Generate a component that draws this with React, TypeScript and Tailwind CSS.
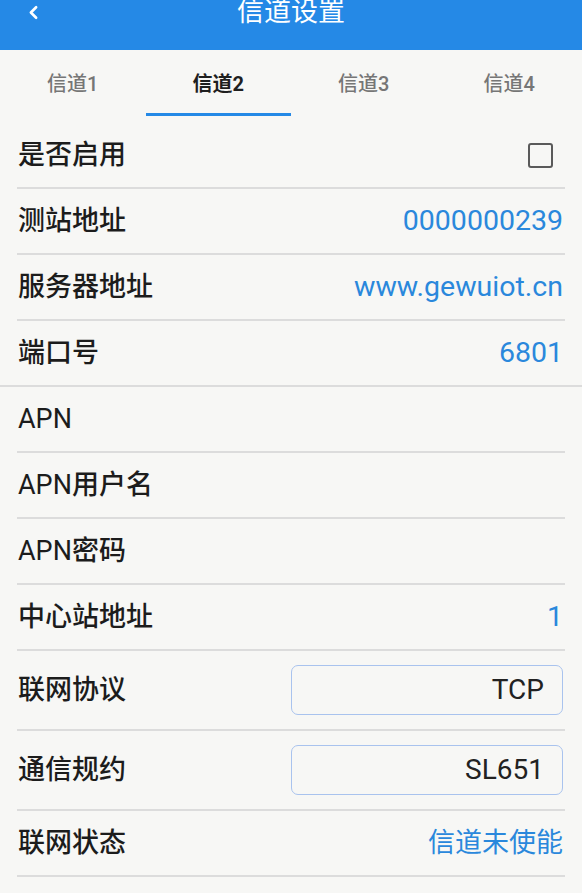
import React from "react";
import { ChevronLeft } from "lucide-react";

const font = { fontFamily: 'Roboto, "Noto Sans CJK SC", sans-serif' };

function Divider({ full }: { full?: boolean }) {
  return <div className={full ? "h-[2px] bg-[#dcdcdc]" : "mx-[17px] h-[2px] bg-[#dcdcdc]"} />;
}

function Label({ prefix, text }: { prefix?: string; text: string }) {
  return (
    <span className="text-[27px] leading-[32px] font-medium text-[#1c1c1c]">
      {prefix && <span className="font-normal">{prefix}</span>}
      {text}
    </span>
  );
}

function Row({
  label,
  prefix,
  value,
  valueCjk,
  children,
}: {
  label: string;
  prefix?: string;
  value?: string;
  valueCjk?: boolean;
  children?: React.ReactNode;
}) {
  return (
    <div className="flex h-[64px] items-center justify-between pl-[18px] pr-[19px]">
      <Label prefix={prefix} text={label} />
      {value !== undefined && (
        <span
          className={
            valueCjk
              ? "text-[27px] leading-[32px] text-[#2a88dc]"
              : "text-[28.5px] leading-[32px] text-[#2a88dc]"
          }
        >
          {value}
        </span>
      )}
      {children}
    </div>
  );
}

function SelectRow({ label, value }: { label: string; value: string }) {
  return (
    <div className="flex h-[78px] items-center justify-between pl-[18px] pr-[19px]">
      <Label text={label} />
      <div className="flex h-[50px] w-[272px] items-center justify-end rounded-[7px] border border-[#a9c3ee] pr-[18px]">
        <span className="text-[28px] leading-[32px] text-[#222]">{value}</span>
      </div>
    </div>
  );
}

export default function App() {
  const tabs = ["信道1", "信道2", "信道3", "信道4"];
  return (
    <div className="min-h-[893px] w-full bg-[#f7f7f5]" style={font}>
      <div className="relative flex h-[50px] items-start justify-center bg-[#2589e6]">
        <ChevronLeft className="absolute left-[23px] top-[2px] h-[21px] w-[21px] text-white" strokeWidth={3} />
        <span className="text-[27px] leading-[24px] text-white">信道设置</span>
      </div>
      <div className="grid h-[73px] grid-cols-4">
        {tabs.map((t, i) => (
          <div key={t} className="flex flex-col items-center pt-[21px]">
            <span
              className={
                i === 1
                  ? "text-[20px] leading-[26px] font-bold text-[#1f1f1f]"
                  : "text-[20px] leading-[26px] font-medium text-[#767676]"
              }
            >
              {t}
            </span>
            <div className={i === 1 ? "mt-[16px] h-[3px] w-full bg-[#2589e6]" : "mt-[16px] h-[3px] w-full"} />
          </div>
        ))}
      </div>
      <Row label="是否启用">
        <div className="mr-[10px] h-[25px] w-[25px] rounded-[3px] border-[2.5px] border-[#5a5a5a]" />
      </Row>
      <Divider />
      <Row label="测站地址" value="0000000239" />
      <Divider />
      <Row label="服务器地址" value="www.gewuiot.cn" />
      <Divider />
      <Row label="端口号" value="6801" />
      <Divider full />
      <Row prefix="APN" label="" />
      <Divider />
      <Row prefix="APN" label="用户名" />
      <Divider />
      <Row prefix="APN" label="密码" />
      <Divider />
      <Row label="中心站地址" value="1" />
      <Divider />
      <SelectRow label="联网协议" value="TCP" />
      <Divider />
      <SelectRow label="通信规约" value="SL651" />
      <Divider />
      <Row label="联网状态" value="信道未使能" valueCjk />
      <Divider />
    </div>
  );
}
